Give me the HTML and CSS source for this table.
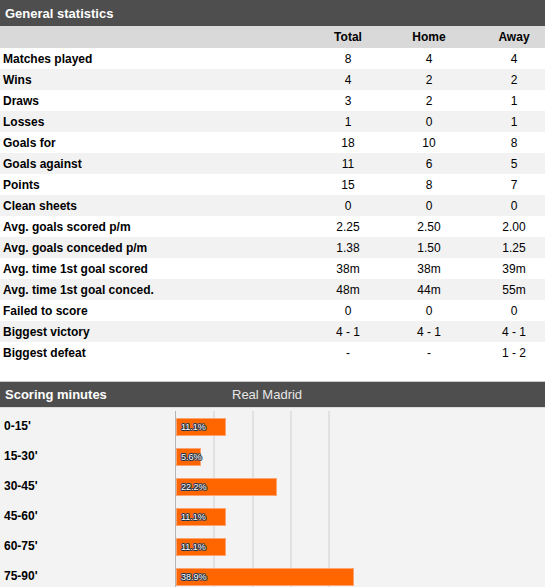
FILE: index.html
```html
<!DOCTYPE html>
<html>
<head>
<meta charset="utf-8">
<link rel="stylesheet" href="styles.css">
</head>
<body>
<section class="panel">
  <div class="panel-head"><span class="title">General statistics</span></div>
  <div class="stats">
    <div class="row head"><span></span><span>Total</span><span>Home</span><span>Away</span></div>
    <div class="row"><span class="label">Matches played</span><span>8</span><span>4</span><span>4</span></div>
    <div class="row alt"><span class="label">Wins</span><span>4</span><span>2</span><span>2</span></div>
    <div class="row"><span class="label">Draws</span><span>3</span><span>2</span><span>1</span></div>
    <div class="row alt"><span class="label">Losses</span><span>1</span><span>0</span><span>1</span></div>
    <div class="row"><span class="label">Goals for</span><span>18</span><span>10</span><span>8</span></div>
    <div class="row alt"><span class="label">Goals against</span><span>11</span><span>6</span><span>5</span></div>
    <div class="row"><span class="label">Points</span><span>15</span><span>8</span><span>7</span></div>
    <div class="row alt"><span class="label">Clean sheets</span><span>0</span><span>0</span><span>0</span></div>
    <div class="row"><span class="label">Avg. goals scored p/m</span><span>2.25</span><span>2.50</span><span>2.00</span></div>
    <div class="row alt"><span class="label">Avg. goals conceded p/m</span><span>1.38</span><span>1.50</span><span>1.25</span></div>
    <div class="row"><span class="label">Avg. time 1st goal scored</span><span>38m</span><span>38m</span><span>39m</span></div>
    <div class="row alt"><span class="label">Avg. time 1st goal conced.</span><span>48m</span><span>44m</span><span>55m</span></div>
    <div class="row"><span class="label">Failed to score</span><span>0</span><span>0</span><span>0</span></div>
    <div class="row alt"><span class="label">Biggest victory</span><span>4 - 1</span><span>4 - 1</span><span>4 - 1</span></div>
    <div class="row"><span class="label">Biggest defeat</span><span>-</span><span>-</span><span>1 - 2</span></div>
  </div>
</section>
<section class="panel scoring">
  <div class="panel-head"><span class="title">Scoring minutes</span><span class="team">Real Madrid</span></div>
  <div class="chart">
    <div class="chart-row"><span class="label">0-15'</span><div class="plot"><div class="bar" style="width:50px"><span class="pct">11.1%</span></div></div></div>
    <div class="chart-row"><span class="label">15-30'</span><div class="plot"><div class="bar" style="width:25px"><span class="pct">5.6%</span></div></div></div>
    <div class="chart-row"><span class="label">30-45'</span><div class="plot"><div class="bar" style="width:101px"><span class="pct">22.2%</span></div></div></div>
    <div class="chart-row"><span class="label">45-60'</span><div class="plot"><div class="bar" style="width:50px"><span class="pct">11.1%</span></div></div></div>
    <div class="chart-row"><span class="label">60-75'</span><div class="plot"><div class="bar" style="width:50px"><span class="pct">11.1%</span></div></div></div>
    <div class="chart-row"><span class="label">75-90'</span><div class="plot"><div class="bar" style="width:178px"><span class="pct">38.9%</span></div></div></div>
  </div>
</section>
</body>
</html>
```
FILE: styles.css
```css
html, body {
  margin: 0;
  padding: 0;
  background: #fff;
}
body {
  width: 545px;
  font-family: "Liberation Sans", Arial, sans-serif;
  font-size: 12px;
  color: #000;
}
.panel-head {
  display: flex;
  align-items: center;
  height: 26px;
  background: #4e4e4e;
  color: #fff;
  font-size: 13px;
  padding-left: 5px;
}
.title {
  font-weight: bold;
}
.stats {
  display: flex;
  flex-direction: column;
}
.row {
  display: grid;
  grid-template-columns: 321px 54px 108px 62px;
  height: 21px;
  align-items: center;
  text-align: center;
}
.row .label {
  text-align: left;
  padding-left: 3px;
  font-weight: bold;
}
.row.head {
  height: 22px;
  background: #d9d9d9;
  font-weight: bold;
}
.row.alt {
  background: #f2f2f2;
}
.scoring {
  margin-top: 18px;
}
.scoring .panel-head {
  height: 25px;
  border-top: 1px solid #c9c9c9;
  border-bottom: 1px solid #dcdcdc;
}
.scoring .title {
  width: 227px;
}
.team {
  color: #e6e6e6;
}
.chart {
  background: #f3f3f3;
  padding-top: 3px;
  display: flex;
  flex-direction: column;
}
.chart-row {
  display: grid;
  grid-template-columns: 175px 1fr;
  height: 30px;
}
.chart-row .label {
  font-weight: bold;
  padding-left: 4px;
  align-self: center;
  line-height: 30px;
}
.plot {
  border-left: 1px solid #b5b5b5;
  display: flex;
  align-items: center;
  background-image:
    linear-gradient(#e1e1e1, #e1e1e1),
    linear-gradient(#e1e1e1, #e1e1e1),
    linear-gradient(#e1e1e1, #e1e1e1),
    linear-gradient(#e1e1e1, #e1e1e1);
  background-size: 2px 100%;
  background-repeat: no-repeat;
  background-position: 37px 0, 76px 0, 114px 0, 152px 0;
}
.bar {
  box-sizing: border-box;
  height: 18px;
  margin-top: 1px;
  background: #ff6600;
  border: 1px solid #ffa470;
  display: flex;
  align-items: center;
  position: relative;
}
.pct {
  font-size: 9px;
  color: #fff;
  padding-left: 4px;
  white-space: nowrap;
  text-shadow:
    -1px 0 #222a3a, 1px 0 #222a3a, 0 -1px #222a3a, 0 1px #222a3a,
    -1px -1px #4a5a7a, 1px 1px #4a5a7a, 1px -1px #4a5a7a, -1px 1px #4a5a7a;
}
```
